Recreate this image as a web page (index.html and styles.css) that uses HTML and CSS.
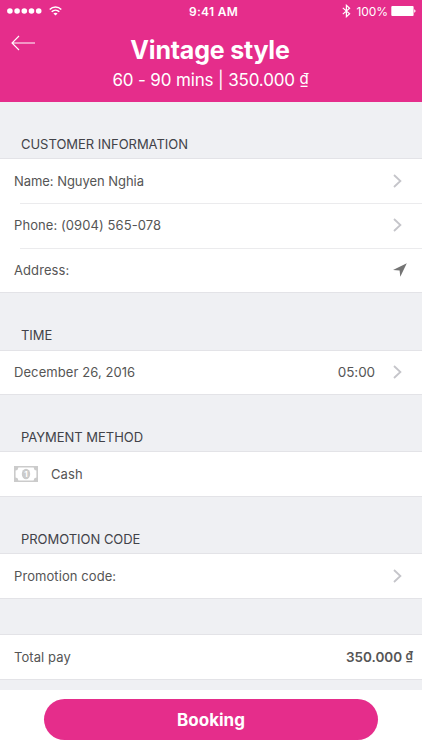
FILE: index.html
```html
<!doctype html>
<html lang="en">
    <head>
        <meta charset="UTF-8" />
        <meta name="viewport" content="width=device-width, initial-scale=1.0" />
        <title>Booking</title>
        <link rel="stylesheet" href="styles.css">
    </head>
    <body>
        <header class="header">
            <div class="status-bar">
                <div class="status-left">
                    <svg class="signal" width="35" height="6" viewBox="0 0 35 6" fill="#fff">
                        <circle cx="2.9" cy="3" r="2.8" />
                        <circle cx="10.1" cy="3" r="2.8" />
                        <circle cx="17.3" cy="3" r="2.8" />
                        <circle cx="24.5" cy="3" r="2.8" />
                        <circle cx="31.7" cy="3" r="2.8" />
                    </svg>
                    <svg class="wifi" width="13" height="10" viewBox="0 0 13 10" fill="none" stroke="#fff" stroke-width="1.5">
                        <path d="M0.7 3.6C4 0.2 9 0.2 12.3 3.6" />
                        <path d="M2.7 5.8c2.2-2.1 5.4-2.1 7.6 0" />
                        <path d="M4.4 7.5c1.2-1.1 3-1.1 4.2 0L6.5 9.6z" fill="#fff" stroke="none" />
                    </svg>
                </div>
                <span class="clock">9:41 AM</span>
                <div class="status-right">
                    <svg width="9" height="14" viewBox="0 0 9 14" fill="none" stroke="#fff" stroke-width="1.2">
                        <path d="M0.8 3.9L7.6 9.7L4.4 12.7V1.3L7.6 4.3L0.8 10.1" />
                    </svg>
                    <span class="percent">100%</span>
                    <svg width="25" height="10" viewBox="0 0 25 10" fill="#fff">
                        <rect x="0.3" y="0" width="22.3" height="10" rx="1" />
                        <path d="M23.2 3.3c1.8 0.5 1.8 2.9 0 3.4z" />
                    </svg>
                </div>
            </div>
            <a class="back" href="#" aria-label="Back">
                <svg width="24" height="16" viewBox="0 0 24 16" fill="none" stroke="#fff" stroke-width="1.1">
                    <path d="M8 1L1 8l7 7M1 8h23" />
                </svg>
            </a>
            <h1>Vintage style</h1>
            <p class="subtitle">60 - 90 mins | 350.000 <span class="dong">₫</span></p>
        </header>

        <main>
            <h2>CUSTOMER INFORMATION</h2>
            <ul class="group">
                <li class="row">
                    <span class="label name">Name: Nguyen Nghia</span>
                    <svg class="chevron" width="9" height="14" viewBox="0 0 9 14"><path d="M1 1l6.4 6L1 13" /></svg>
                </li>
                <li class="row">
                    <span class="label">Phone: (0904) 565-078</span>
                    <svg class="chevron" width="9" height="14" viewBox="0 0 9 14"><path d="M1 1l6.4 6L1 13" /></svg>
                </li>
                <li class="row">
                    <span class="label">Address:</span>
                    <svg class="locate" width="14" height="14" viewBox="0 0 14 14"><path d="M13.8 0.3L7.3 13.8L6.6 7.6L0 6.9z" /></svg>
                </li>
            </ul>

            <h2>TIME</h2>
            <ul class="group">
                <li class="row">
                    <span class="label">December 26, 2016</span>
                    <span class="value">05:00</span>
                    <svg class="chevron" width="9" height="14" viewBox="0 0 9 14"><path d="M1 1l6.4 6L1 13" /></svg>
                </li>
            </ul>

            <h2>PAYMENT METHOD</h2>
            <ul class="group">
                <li class="row">
                    <svg class="cash" width="24" height="16" viewBox="0 0 24 16">
                        <path d="M0 0h24v16H0zM4.4 1.6A3 3 0 0 1 1.6 4.4V11.6A3 3 0 0 1 4.4 14.4H19.6A3 3 0 0 1 22.4 11.6V4.4A3 3 0 0 1 19.6 1.6z" fill-rule="evenodd" />
                        <ellipse cx="12" cy="8" rx="4.2" ry="5.3" />
                        <text x="12" y="11">1</text>
                    </svg>
                    <span class="label">Cash</span>
                </li>
            </ul>

            <h2>PROMOTION CODE</h2>
            <ul class="group">
                <li class="row">
                    <span class="label">Promotion code:</span>
                    <svg class="chevron" width="9" height="14" viewBox="0 0 9 14"><path d="M1 1l6.4 6L1 13" /></svg>
                </li>
            </ul>

            <ul class="group total">
                <li class="row">
                    <span class="label">Total pay</span>
                    <strong class="price">350.000 <span class="dong">₫</span></strong>
                </li>
            </ul>
        </main>

        <footer class="footer">
            <button type="button">Booking</button>
        </footer>
    </body>
</html>
```

FILE: styles.css
```css
* {
    box-sizing: border-box;
    margin: 0;
    padding: 0;
}

body {
    font-family: Inter, "Liberation Sans", sans-serif;
    background-color: #eff0f3;
    color: #555;
    width: 422px;
    height: 750px;
    display: flex;
    flex-direction: column;
    overflow: hidden;
}

svg {
    display: block;
    flex: none;
}

.header {
    position: relative;
    height: 102px;
    background-color: #e52d8b;
    color: #fff;
    text-align: center;
}

.status-bar {
    height: 22px;
    padding: 0 6px 0 7px;
    display: grid;
    grid-template-columns: 1fr auto 1fr;
    align-items: center;
}

.status-left,
.status-right {
    display: flex;
    align-items: center;
}

.status-left {
    gap: 7px;
}

.status-right {
    justify-content: flex-end;
}

.clock {
    font-size: 12px;
    font-weight: 600;
    letter-spacing: 0.3px;
    padding-left: 4px;
}

.percent {
    font-size: 12px;
    letter-spacing: -0.1px;
    margin: 0 3px 0 6px;
}

.back {
    position: absolute;
    left: 11px;
    top: 35px;
}

h1 {
    font-size: 25px;
    font-weight: 700;
    line-height: 30px;
    letter-spacing: -0.2px;
    margin-top: 13px;
    padding-right: 2px;
}

.subtitle {
    font-size: 17px;
    font-weight: 400;
    line-height: 22px;
    letter-spacing: -0.15px;
    margin-top: 4px;
    padding-right: 1px;
}

.dong {
    font-size: 0.88em;
    line-height: 1;
    vertical-align: 0.16em;
}

main {
    height: 588px;
    display: flex;
    flex-direction: column;
}

h2 {
    height: 56.3px;
    padding: 34px 21px 0;
    font-size: 13px;
    line-height: 16px;
    font-weight: 400;
    letter-spacing: -0.03px;
    color: #414248;
}

.group {
    list-style: none;
    background-color: #fff;
    border-top: 1px solid #e3e3e7;
    border-bottom: 1px solid #e3e3e7;
}

.row {
    position: relative;
    height: 43.5px;
    padding: 0 9px 0 14px;
    display: flex;
    align-items: center;
}

.row + .row {
    height: 44.8px;
}

.row + .row::before {
    content: "";
    position: absolute;
    top: 0;
    left: 20px;
    right: 0;
    height: 1px;
    background-color: #ebebed;
}

.label {
    flex: 1;
    font-size: 13px;
    letter-spacing: 0.08px;
}

.name {
    letter-spacing: -0.05px;
}

.value {
    font-size: 13.5px;
    letter-spacing: -0.1px;
    margin-right: 18px;
}

.chevron {
    margin-right: 11px;
    fill: none;
    stroke: #c5c5ca;
    stroke-width: 1.8;
}

.locate {
    margin-right: 6px;
    fill: #747474;
}

.cash {
    margin-right: 13px;
    fill: #cbcbcb;
}

.cash text {
    font-size: 8px;
    font-weight: 700;
    text-anchor: middle;
    fill: #fff;
}

.total {
    margin-top: 35.3px;
}

.price {
    font-size: 13.5px;
    font-weight: 600;
}

.footer {
    height: 60px;
    padding-top: 9px;
    background-color: #fff;
    text-align: center;
}

button {
    width: 334px;
    height: 41px;
    background-color: #e52d8b;
    color: #fff;
    font-family: inherit;
    font-size: 17px;
    font-weight: 700;
    border: none;
    border-radius: 21px;
    cursor: pointer;
}
```
